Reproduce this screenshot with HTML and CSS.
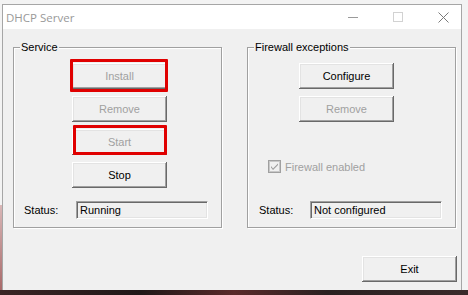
FILE: index.html
```html
<!DOCTYPE html>
<html>
<head>
<meta charset="utf-8">
<link rel="stylesheet" href="styles.css">
</head>
<body>
<div class="window">
  <div class="titlebar">
    <span class="title">DHCP Server</span>
    <div class="caption-btns">
      <svg class="cap" width="10" height="10" viewBox="0 0 10 10"><line x1="0" y1="5.5" x2="10" y2="5.5" stroke="#9a9a9a" stroke-width="1"/></svg>
      <svg class="cap" width="10" height="10" viewBox="0 0 10 10"><rect x="0.5" y="0.5" width="9" height="9" fill="none" stroke="#d2d2d2" stroke-width="1"/></svg>
      <svg class="cap" width="11" height="11" viewBox="0 0 11 11"><path d="M0.5 0.5 L10.5 10.5 M10.5 0.5 L0.5 10.5" stroke="#7a7a7a" stroke-width="1" fill="none"/></svg>
    </div>
  </div>
  <div class="client">
    <div class="groups">
      <section class="group">
        <span class="legend">Service</span>
        <div class="buttons buttons-service">
          <div class="mark mark-install"><button class="btn" disabled>Install</button></div>
          <button class="btn" disabled>Remove</button>
          <div class="mark mark-start"><button class="btn" disabled>Start</button></div>
          <button class="btn">Stop</button>
        </div>
        <div class="status-row">
          <span class="status-label">Status:</span>
          <div class="status-field">Running</div>
        </div>
      </section>
      <section class="group">
        <span class="legend">Firewall exceptions</span>
        <div class="buttons buttons-firewall">
          <button class="btn">Configure</button>
          <button class="btn" disabled>Remove</button>
        </div>
        <div class="check">
          <svg class="check-box" width="13" height="13" viewBox="0 0 13 13">
            <rect x="0.5" y="0.5" width="12" height="12" fill="#f0f0f0" stroke="#a0a0a0"/>
            <rect x="1.5" y="1.5" width="10" height="10" fill="#f0f0f0" stroke="#c8c8c8"/>
            <path d="M3 6 L5 8.5 L10 3.5 L10 5 L5 10 L3 7.5 Z" fill="#9a9a9a"/>
          </svg>
          <span class="check-label">Firewall enabled</span>
        </div>
        <div class="status-row status-row-fw">
          <span class="status-label">Status:</span>
          <div class="status-field">Not configured</div>
        </div>
      </section>
    </div>
    <div class="footer">
      <button class="btn">Exit</button>
    </div>
  </div>
</div>
</body>
</html>
```

FILE: styles.css
```css
html, body {
  margin: 0;
  padding: 0;
}
body {
  width: 468px;
  height: 295px;
  overflow: hidden;
  background:
    linear-gradient(#d9b7b7, #a86a6a) 0 205px / 2px 85px no-repeat,
    linear-gradient(to right, #3a2424, #201818 30%, #5a2a2a 50%, #2a2020 70%, #3a2a2a) 0 290px / 468px 5px no-repeat,
    #f3f3f3;
  font-family: "Liberation Sans", Arial, sans-serif;
  font-size: 11px;
  color: #000;
}
.window {
  margin: 4px 0 0 2px;
  width: 458px;
  height: 285px;
  border: 1px solid #a6a6a6;
  border-bottom: none;
  display: flex;
  flex-direction: column;
  background: #f0f0f0;
}
.titlebar {
  height: 24px;
  background: #fff;
  display: flex;
  align-items: center;
  justify-content: space-between;
}
.title {
  font-family: "Open Sans", "Segoe UI", sans-serif;
  font-size: 11.5px;
  color: #999;
  margin-left: 3px;
}
.caption-btns {
  display: flex;
  align-items: center;
  gap: 35px;
  padding-right: 12px;
}
.cap {
  display: block;
}
.client {
  flex: 1;
  padding: 18px 5px 0 10px;
  display: flex;
  flex-direction: column;
}
.groups {
  display: grid;
  grid-template-columns: 209px 209px;
  column-gap: 25px;
}
.group {
  position: relative;
  border: 1px solid #a0a0a0;
  box-shadow: inset 1px 1px #fff, 1px 1px #fff;
  display: flex;
  flex-direction: column;
  padding: 15px 0 8px 0;
}
.legend {
  position: absolute;
  top: -7px;
  left: 6px;
  padding: 0 1px;
  background: #f0f0f0;
  line-height: 13px;
}
.buttons {
  display: flex;
  flex-direction: column;
  gap: 7px;
}
.buttons-service {
  margin-left: 58px;
}
.buttons-firewall {
  margin-left: 51px;
}
.btn {
  display: block;
  width: 95px;
  height: 26px;
  padding: 0;
  border: none;
  background: #f0f0f0;
  box-shadow: inset -1px -1px #696969, inset 1px 1px #fff, inset -2px -2px #a0a0a0, inset 2px 2px #e3e3e3;
  font-family: "Liberation Sans", Arial, sans-serif;
  font-size: 11px;
  color: #000;
}
.btn:disabled {
  color: #a0a0a0;
}
.mark {
  position: relative;
  width: 95px;
}
.mark::after {
  content: "";
  position: absolute;
  border: 3px solid #e00000;
  border-radius: 1px;
}
.mark-install::after {
  top: -4px;
  bottom: -3px;
  left: -2px;
  right: -1px;
}
.mark-start::after {
  top: -4px;
  bottom: 0px;
  left: 1px;
  right: 0px;
}
.check {
  display: flex;
  align-items: center;
  margin: 38px 0 0 20px;
  gap: 4px;
}
.check-box {
  display: block;
}
.check-label {
  color: #a0a0a0;
}
.status-row {
  display: flex;
  align-items: center;
  justify-content: space-between;
  margin-top: 13px;
  padding: 0 13px 0 10px;
}
.status-row-fw {
  margin-top: auto;
  padding-left: 11px;
}
.status-field {
  width: 127px;
  height: 16px;
  line-height: 16px;
  padding: 0 0 0 3px;
  border-top: 1px solid #a0a0a0;
  border-left: 1px solid #a0a0a0;
  border-right: 1px solid #fff;
  border-bottom: 1px solid #fff;
  box-shadow: inset 1px 1px #696969, inset -1px -1px #e3e3e3;
  background: #f0f0f0;
}
.footer {
  display: flex;
  justify-content: flex-end;
  margin-top: 28px;
  margin-right: -1px;
}
```
